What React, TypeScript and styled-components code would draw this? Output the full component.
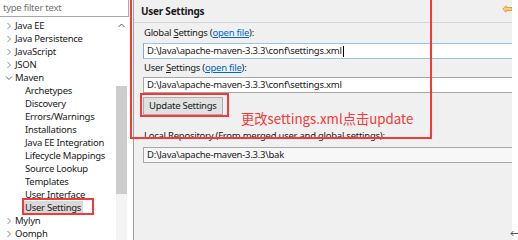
import React from "react";
import styled, { createGlobalStyle } from "styled-components";

const GlobalStyle = createGlobalStyle`
  html, body {
    margin: 0;
    padding: 0;
    background: #ffffff;
  }
  body {
    font-family: "Noto Sans", "Noto Sans CJK SC", sans-serif;
    font-size: 9.5px;
    letter-spacing: -0.25px;
    color: #1a1a1a;
  }
`;

const Page = styled.div`
  position: relative;
  display: flex;
  width: 518px;
  height: 240px;
  overflow: hidden;
  background: #ffffff;
`;

const Sidebar = styled.div`
  display: flex;
  flex-direction: column;
  width: 133px;
  flex-shrink: 0;
`;

const FilterInput = styled.div`
  height: 16px;
  width: 125px;
  border: 1px solid #a8a8a8;
  border-left: none;
  border-top: none;
  color: #707070;
  line-height: 16px;
  padding-left: 3px;
  box-sizing: content-box;
`;

const TreeArea = styled.div`
  display: flex;
  flex: 1;
`;

const TreeList = styled.ul`
  list-style: none;
  margin: 0;
  padding: 2px 0 0 0;
  width: 116px;
`;

const TreeRow = styled.li<{ $depth: number }>`
  display: flex;
  align-items: center;
  height: 13px;
  line-height: 13px;
  white-space: nowrap;
  padding-left: ${(p) => (p.$depth === 0 ? 4 : 24)}px;
`;

const TreeLabel = styled.span<{ $selected?: boolean }>`
  padding: 0 2px 0 1px;
  background: ${(p) => (p.$selected ? "#d9d9d9" : "transparent")};
`;

const Twisty = styled.span`
  display: inline-flex;
  width: 9px;
  justify-content: center;
  margin-right: 1px;
`;

const Scrollbar = styled.div`
  display: flex;
  flex-direction: column;
  width: 11px;
  margin-top: 1px;
  background: #f4f4f4;
`;

const ScrollArrow = styled.div`
  height: 14px;
  display: flex;
  align-items: center;
  justify-content: center;
  background: #ffffff;
`;

const ScrollSpace = styled.div<{ $h: number }>`
  height: ${(p) => p.$h}px;
  background: #ffffff;
`;

const ScrollThumb = styled.div`
  height: 108px;
  background: #cdcdcd;
`;

const Panel = styled.div`
  position: relative;
  display: flex;
  flex-direction: column;
  width: 378px;
  flex-shrink: 0;
  background: #f0f0f0;
  border-left: 1px solid #a0a0a0;
  overflow: hidden;
`;

const PanelHeader = styled.div`
  height: 22px;
  line-height: 22px;
  padding-left: 7px;
  font-weight: bold;
  font-size: 10px;
  border-bottom: 1px solid #d5d5d5;
`;

const PanelBody = styled.div`
  display: flex;
  flex-direction: column;
  padding: 3px 0 0 9px;
`;

const FieldLabel = styled.div<{ $gap?: number }>`
  height: 14px;
  line-height: 14px;
  padding-left: 1px;
  margin-top: ${(p) => p.$gap ?? 0}px;
  white-space: nowrap;
`;

const Mnemonic = styled.span`
  text-decoration: underline;
`;

const Link = styled.span`
  color: #0066cc;
  text-decoration: underline;
`;

const PathField = styled.div<{ $focused?: boolean; $readonly?: boolean; $gap: number }>`
  height: 14px;
  line-height: 14px;
  margin-top: ${(p) => p.$gap}px;
  padding-left: 3px;
  border: 1px solid ${(p) => (p.$focused ? "#99c4ea" : "#a8a8a8")};
  border-right: none;
  border-left-color: ${(p) => (p.$focused ? "#7aa9d8" : "#a8a8a8")};
  background: ${(p) => (p.$readonly ? "#f7f7f7" : "#ffffff")};
  white-space: nowrap;
`;

const Caret = styled.span`
  display: inline-block;
  width: 1px;
  height: 11px;
  background: #000;
  vertical-align: middle;
  margin-left: 1px;
`;

const Button = styled.div`
  align-self: flex-start;
  margin-top: 4px;
  height: 16px;
  line-height: 16px;
  padding: 0 5px;
  border: 1px solid #adadad;
  background: #e1e1e1;
  white-space: nowrap;
`;

const Strip = styled.div`
  flex: 1;
  background: #ffffff;
`;

const BackIcon = styled.svg`
  position: absolute;
  top: 5px;
  right: 0;
`;

const CornerArrow = styled.svg`
  position: absolute;
  right: 0;
  bottom: 3px;
`;

const Callout = styled.div<{ $x: number; $y: number; $w: number; $h: number }>`
  position: absolute;
  left: ${(p) => p.$x}px;
  top: ${(p) => p.$y}px;
  width: ${(p) => p.$w}px;
  height: ${(p) => p.$h}px;
  border: 2px solid #f53838;
  box-sizing: border-box;
  pointer-events: none;
`;

const Note = styled.div`
  position: absolute;
  left: 241px;
  top: 110px;
  font-family: "Noto Sans CJK SC", "Noto Sans", sans-serif;
  font-size: 13.3px;
  letter-spacing: 0;
  line-height: 18px;
  color: #f53838;
  white-space: nowrap;
`;

const Chevron = ({ open }: { open?: boolean }) =>
  open ? (
    <svg width="8" height="6" viewBox="0 0 8 6">
      <path d="M1 1.5 L4 4.5 L7 1.5" fill="none" stroke="#666" strokeWidth="1" />
    </svg>
  ) : (
    <svg width="6" height="8" viewBox="0 0 6 8">
      <path d="M1.5 1 L4.5 4 L1.5 7" fill="none" stroke="#8a8a8a" strokeWidth="1" />
    </svg>
  );

interface Node {
  label: string;
  depth: number;
  open?: boolean;
  selected?: boolean;
}

const nodes: Array<Node> = [
  { label: "Java EE", depth: 0 },
  { label: "Java Persistence", depth: 0 },
  { label: "JavaScript", depth: 0 },
  { label: "JSON", depth: 0 },
  { label: "Maven", depth: 0, open: true },
  { label: "Archetypes", depth: 1 },
  { label: "Discovery", depth: 1 },
  { label: "Errors/Warnings", depth: 1 },
  { label: "Installations", depth: 1 },
  { label: "Java EE Integration", depth: 1 },
  { label: "Lifecycle Mappings", depth: 1 },
  { label: "Source Lookup", depth: 1 },
  { label: "Templates", depth: 1 },
  { label: "User Interface", depth: 1 },
  { label: "User Settings", depth: 1, selected: true },
  { label: "Mylyn", depth: 0 },
  { label: "Oomph", depth: 0 },
];

const App = () => {
  return (
    <Page>
      <GlobalStyle />
      <Sidebar>
        <FilterInput>type filter text</FilterInput>
        <TreeArea>
          <TreeList>
            {nodes.map((n) => (
              <TreeRow key={n.label} $depth={n.depth}>
                {n.depth === 0 && (
                  <Twisty>
                    <Chevron open={n.open} />
                  </Twisty>
                )}
                <TreeLabel $selected={n.selected}>{n.label}</TreeLabel>
              </TreeRow>
            ))}
          </TreeList>
          <Scrollbar>
            <ScrollArrow>
              <svg width="7" height="5" viewBox="0 0 7 5">
                <path d="M0.5 4 L3.5 1 L6.5 4" fill="none" stroke="#606060" strokeWidth="1" />
              </svg>
            </ScrollArrow>
            <ScrollSpace $h={54} />
            <ScrollThumb />
          </Scrollbar>
        </TreeArea>
      </Sidebar>

      <Panel>
        <PanelHeader>User Settings</PanelHeader>
        <PanelBody>
          <FieldLabel>
            Global <Mnemonic>S</Mnemonic>ettings (<Link>open file</Link>):
          </FieldLabel>
          <PathField $gap={3} $focused>
            D:\Java\apache-maven-3.3.3\conf\settings.xml
            <Caret />
          </PathField>
          <FieldLabel $gap={2}>
            User <Mnemonic>S</Mnemonic>ettings (<Link>open file</Link>):
          </FieldLabel>
          <PathField $gap={2}>D:\Java\apache-maven-3.3.3\conf\settings.xml</PathField>
          <Button>Update Settings</Button>
          <FieldLabel $gap={14}>Local Repository (From merged user and global settings):</FieldLabel>
          <PathField $gap={4} $readonly>
            D:\Java\apache-maven-3.3.3\bak
          </PathField>
        </PanelBody>
        <BackIcon width="10" height="8" viewBox="0 0 10 8">
          <path
            d="M0.8 4 L4 0.8 L4 2.5 L10 2.5 L10 5.5 L4 5.5 L4 7.2 Z"
            fill="#f7d27a"
            stroke="#d99a2b"
            strokeWidth="0.9"
          />
        </BackIcon>
      </Panel>

      <Strip />

      <CornerArrow width="8" height="7" viewBox="0 0 8 7">
        <path d="M8 3.5 L1 3.5 M3.5 1 L1 3.5 L3.5 6" fill="none" stroke="#555" strokeWidth="1" />
      </CornerArrow>

      <Callout $x={130} $y={-3} $w={302} $h={142} />
      <Callout $x={140} $y={93} $w={89} $h={24} />
      <Callout $x={22} $y={198} $w={72} $h={17} />
      <Note>更改settings.xml点击update</Note>
    </Page>
  );
};

export default App;
